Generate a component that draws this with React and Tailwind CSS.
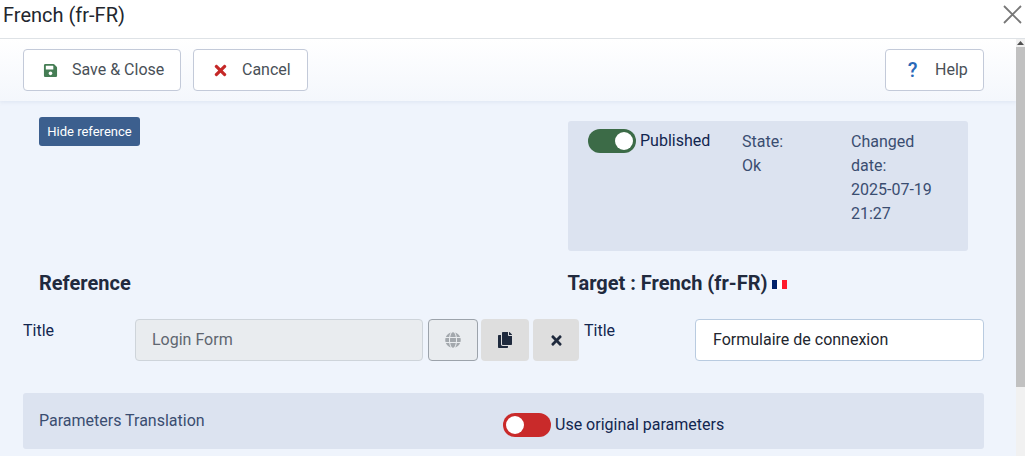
import { FaSave, FaTimes, FaGlobe, FaCopy } from 'react-icons/fa'

const font = { fontFamily: 'Roboto, sans-serif' }

function ToolbarButton({ icon, label, className }) {
  return (
    <button className={`h-[42px] flex items-center bg-white border border-[#c3cad9] rounded-[4px] text-[16px] text-[#495057] ${className}`}>
      {icon}
      <span>{label}</span>
    </button>
  )
}

function Toggle({ on, color }) {
  return (
    <span className={`w-[48px] h-[24px] rounded-full flex items-center px-[3px] shrink-0 ${color} ${on ? 'justify-end' : 'justify-start'}`}>
      <span className="w-[18px] h-[18px] bg-white rounded-full" />
    </span>
  )
}

export default function App() {
  return (
    <div style={font} className="w-[1025px] h-[456px] overflow-hidden flex flex-col bg-white">
      {/* Modal header */}
      <div className="h-[39px] shrink-0 border-b border-[#dee2e6] flex items-center justify-between pl-[3px] pr-[3px]">
        <span className="text-[20px] text-[#22262e] -mt-[9px] leading-[30px]">French (fr-FR)</span>
        <svg width="19" height="19" viewBox="0 0 19 19" className="-mt-[9px]" stroke="#777" strokeWidth="1.8" fill="none">
          <path d="M1 1l17 17M18 1L1 18" />
        </svg>
      </div>

      <div className="flex flex-1 min-h-0">
        <div className="flex-1 min-w-0 bg-[#eff4fc] overflow-hidden">
          {/* Toolbar */}
          <div className="h-[62px] flex items-start pt-[10px] pl-[23px] pr-[32px] bg-gradient-to-b from-white to-[#f4f7fc] shadow-[0_1px_4px_rgba(120,140,180,0.15)]">
            <ToolbarButton
              className="w-[158px] pl-[19px] gap-[14px]"
              label="Save & Close"
              icon={<FaSave size={15} className="text-[#457d54]" />}
            />
            <ToolbarButton
              className="w-[115px] ml-[12px] pl-[18px] gap-[13px]"
              label="Cancel"
              icon={<FaTimes size={17} className="text-[#c52827]" />}
            />
            <ToolbarButton
              className="w-[99px] ml-auto pl-[20px] gap-[16px]"
              label="Help"
              icon={<span className="w-[13px] text-center text-[20px] leading-none font-medium text-[#2a69b8]">?</span>}
            />
          </div>

          {/* Top row */}
          <div className="flex pt-[16px] pl-[39px]">
            <div className="w-[529px]">
              <button className="w-[101px] h-[29px] bg-[#3c5f8e] rounded-[3px] text-white text-[13px]">Hide reference</button>
            </div>
            <div className="w-[400px] h-[130px] mt-[4px] bg-[#dce3f0] rounded-[3px] flex pt-[8px] pl-[20px]">
              <div className="w-[154px] flex items-start gap-[4px] text-[16px] text-[#12264f] leading-[24px]">
                <Toggle on color="bg-[#3c6b47]" />
                <span>Published</span>
              </div>
              <div className="w-[109px] text-[16px] text-[#3a4d70] leading-[24px] pt-[1px]">
                <div>State:</div>
                <div>Ok</div>
              </div>
              <div className="w-[90px] text-[16px] text-[#3a4d70] leading-[24px] pt-[1px]">
                <div>Changed date:</div>
                <div>2025-07-19 21:27</div>
              </div>
            </div>
          </div>

          {/* Headings */}
          <div className="flex mt-[20px] pl-[39px] h-[24px] items-center text-[20px] font-bold text-[#212a3e]">
            <div className="w-[529px]">Reference</div>
            <div className="flex items-center gap-[5px] -ml-[0.5px]">
              <span>Target : French (fr-FR)</span>
              <span className="flex h-[9px] w-[15px] mt-[2px]">
                <span className="flex-1 bg-[#012169]" />
                <span className="flex-1 bg-white" />
                <span className="flex-1 bg-[#ff1a2b]" />
              </span>
            </div>
          </div>

          {/* Title fields */}
          <div className="flex mt-[24px] pl-[23px] h-[42px]">
            <div className="w-[112px] text-[16px] text-[#12264f] leading-[24px]">Title</div>
            <div className="w-[288px] h-[42px] bg-[#e9ecef] border border-[#ced4da] rounded-[4px] flex items-center pl-[16px] text-[16px] text-[#5f6670]">Login Form</div>
            <button className="w-[50px] h-[42px] ml-[5px] bg-[#e9ecef] border border-[#9ca3ab] rounded-[4px] flex items-center justify-center">
              <FaGlobe size={16} className="text-[#a3a8ad]" />
            </button>
            <button className="w-[48px] h-[42px] ml-[3px] bg-[#dedede] rounded-[4px] flex items-center justify-center">
              <FaCopy size={16} className="text-[#1f2a3d]" />
            </button>
            <button className="w-[46px] h-[42px] ml-[4px] bg-[#dedede] rounded-[4px] flex items-center justify-center">
              <FaTimes size={15} className="text-[#1f2a3d]" />
            </button>
            <div className="w-[111px] ml-[5px] text-[16px] text-[#12264f] leading-[24px]">Title</div>
            <div className="w-[289px] h-[42px] bg-white border border-[#b9cbe0] rounded-[4px] flex items-center pl-[17px] text-[16px] text-[#22262e]">Formulaire de connexion</div>
          </div>

          {/* Parameters */}
          <div className="flex items-start w-[961px] h-[56px] mt-[32px] ml-[23px] pl-[16px] pt-[20px] bg-[#dce3f0] rounded-[3px]">
            <div className="w-[464px] text-[16px] leading-[16px] text-[#3a4d70]">Parameters Translation</div>
            <Toggle color="bg-[#c92a2a]" />
            <span className="ml-[4px] text-[16px] leading-[24px] text-[#12264f]">Use original parameters</span>
          </div>
        </div>

        {/* Scrollbar */}
        <div className="w-[9px] shrink-0 bg-[#f1f1f1] flex flex-col">
          <div className="h-[8px] flex items-center justify-center">
            <svg width="7" height="4" viewBox="0 0 7 4" fill="#505050"><path d="M3.5 0L7 4H0z" /></svg>
          </div>
          <div className="h-[340px] bg-[#c1c1c1]" />
        </div>
      </div>
    </div>
  )
}
